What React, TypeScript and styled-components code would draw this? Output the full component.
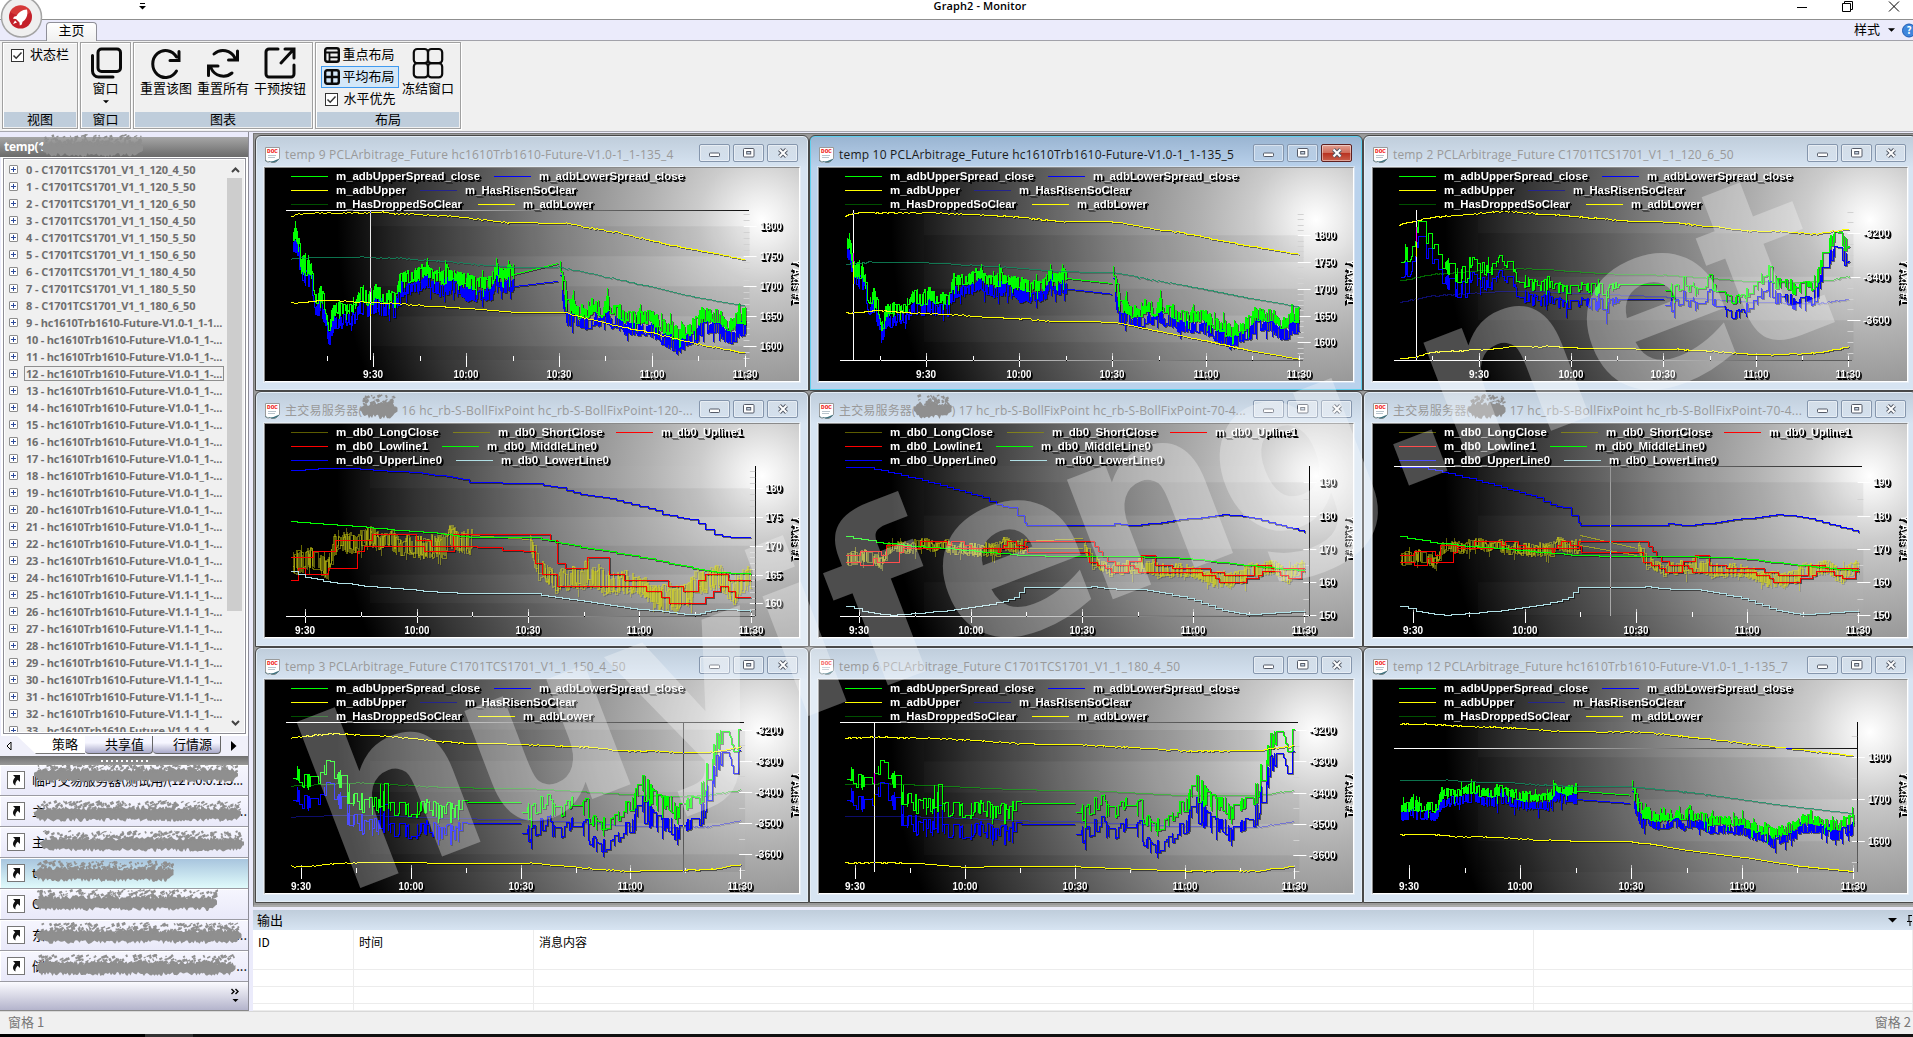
import React from "react";
import styled, { createGlobalStyle, css } from "styled-components";

const UI = `"Open Sans", "Noto Sans", "Noto Sans CJK SC", sans-serif`;
const CN = `"Noto Sans CJK SC", "Open Sans", sans-serif`;

const GlobalStyle = createGlobalStyle`
  * { box-sizing: border-box; }
  body { margin: 0; background: #f0f0f0; overflow: hidden; }
`;

/* ---------- deterministic noise ---------- */

function rng(seed: number) {
  let a = seed;
  return () => {
    a = (a + 0x6d2b79f5) | 0;
    let t = Math.imul(a ^ (a >>> 15), 1 | a);
    t = (t + Math.imul(t ^ (t >>> 7), 61 | t)) ^ t;
    return ((t ^ (t >>> 14)) >>> 0) / 4294967296;
  };
}

/* ---------- chart data ---------- */

type Pt = [number, number];
type Band = [number, number, number];
/** Raster on which a series was sampled: divide, then shift. */
type Grid = { sx: number; sy: number; ox: number; oy: number };
/** Pixel scale: x at 9:30, px per minute, y of value v, px per value unit. */
type Scale = { x: number; k: number; y: number; v: number; u: number };

const G1: Grid = { sx: 2.8, sy: 3, ox: 13, oy: 38 };
const G2: Grid = { sx: 2.8, sy: 3, ox: 11, oy: 38 };
const G3: Grid = { sx: 2.835, sy: 3, ox: 13, oy: 38 };
const G4: Grid = { sx: 2.8, sy: 3, ox: 13, oy: 34 };
const G6: Grid = { sx: 2.835, sy: 3, ox: 13, oy: 34 };
const G7: Grid = { sx: 2.8, sy: 3, ox: 13, oy: 36 };
const G8: Grid = { sx: 1.419, sy: 3, ox: 11, oy: 40 };
const G9: Grid = { sx: 2.835, sy: 3, ox: 13, oy: 36 };

const S1: Scale = { x: 108.4, k: 3.093, y: 58.3, v: 1800, u: 0.6 };
const S2: Scale = { x: 107.2, k: 3.104, y: 67.3, v: 1800, u: 0.535 };
const S3: Scale = { x: 105.5, k: 3.083, y: 65.3, v: -3200, u: 0.2175 };
const S4: Scale = { x: 40.2, k: 3.714, y: 64.3, v: 180, u: 5.75 };
const S5: Scale = { x: 40.4, k: 3.708, y: 58.3, v: 190, u: 3.325 };
const S7: Scale = { x: 36.3, k: 3.657, y: 49.7, v: -3200, u: 0.3117 };
const S8: Scale = { x: 36.2, k: 3.66, y: 50, v: -3200, u: 0.3133 };
const S9: Scale = { x: 36.4, k: 3.695, y: 77.3, v: 1800, u: 0.42 };

const hcAM: Band[] = [
  [110, 320, 328], [116, 288, 328], [124, 305, 335], [130, 325, 385], [135, 372, 425], [145, 380, 430],
  [160, 395, 430], [168, 440, 470], [175, 470, 520], [180, 490, 520], [190, 468, 505], [200, 500, 545],
  [207, 540, 575], [213, 575, 612], [222, 530, 575], [230, 520, 550], [240, 518, 560], [260, 518, 545],
  [285, 515, 545], [292, 495, 520], [302, 468, 510], [320, 490, 520], [335, 470, 520], [345, 458, 510],
  [365, 490, 520], [385, 480, 510], [395, 490, 530], [405, 465, 500], [413, 415, 470], [420, 425, 458],
  [440, 420, 455], [460, 415, 450], [485, 396, 440], [495, 405, 440], [505, 420, 455], [530, 425, 458],
  [545, 400, 455], [560, 415, 448], [575, 425, 460], [600, 430, 475], [630, 445, 475], [665, 440, 475],
  [672, 420, 455], [680, 398, 430], [700, 415, 448], [731, 397, 445],
];
const hcPM: Band[] = [
  [859, 400, 450], [866, 430, 480], [875, 475, 520], [880, 522, 550], [898, 490, 550], [905, 522, 555],
  [915, 525, 560], [940, 532, 560], [960, 515, 545], [980, 530, 560], [995, 486, 550], [1001, 527, 555],
  [1010, 523, 550], [1030, 523, 565], [1040, 541, 575], [1060, 541, 575], [1090, 545, 575],
  [1115, 540, 578], [1130, 555, 590], [1150, 570, 605], [1170, 570, 620], [1190, 590, 632],
  [1205, 585, 620], [1230, 568, 610], [1245, 555, 600], [1255, 530, 570], [1280, 540, 572],
  [1305, 540, 575], [1325, 563, 600], [1345, 567, 600], [1355, 545, 585], [1380, 525, 578],
];
const csAM: Band[] = [
  [112, 365, 400], [120, 350, 395], [125, 335, 400], [135, 350, 400], [150, 330, 375], [158, 280, 320],
  [163, 252, 330], [172, 290, 330], [185, 310, 350], [197, 300, 345], [205, 320, 360], [218, 365, 400],
  [228, 385, 420], [245, 390, 430], [262, 410, 450], [275, 425, 460], [290, 400, 455], [297, 430, 470],
  [308, 376, 415], [320, 375, 415], [330, 390, 425], [345, 390, 445], [365, 400, 435], [380, 395, 425],
  [390, 375, 400], [397, 360, 385], [408, 380, 410], [420, 395, 430], [432, 405, 430], [442, 425, 465],
  [460, 440, 470], [470, 422, 475], [482, 450, 492], [500, 440, 475], [515, 450, 488], [532, 418, 478],
  [540, 455, 480], [560, 455, 490], [580, 455, 500], [600, 460, 498], [620, 455, 485], [640, 450, 490],
  [665, 460, 498], [680, 455, 492], [695, 465, 517], [710, 450, 485], [733, 459, 463],
];
const csPM: Band[] = [
  [862, 455, 485], [870, 475, 502], [890, 460, 500], [905, 450, 488], [920, 428, 465], [935, 455, 492],
  [950, 465, 498], [965, 465, 492], [980, 440, 475], [993, 430, 475], [1005, 450, 492], [1015, 448, 500],
  [1030, 480, 512], [1045, 495, 525], [1060, 490, 520], [1075, 490, 518], [1090, 478, 505],
  [1105, 455, 492], [1120, 460, 485], [1132, 435, 475], [1145, 388, 445], [1160, 405, 465],
  [1175, 425, 475], [1190, 445, 478], [1215, 440, 478], [1235, 465, 507], [1250, 452, 482],
  [1270, 448, 470], [1280, 450, 482], [1295, 410, 460], [1310, 360, 415], [1325, 312, 365],
  [1335, 312, 352], [1347, 298, 325], [1360, 312, 320], [1370, 318, 370], [1385, 303, 348],
];
const rbAM: Band[] = [
  [110, 485, 545], [125, 462, 560], [140, 480, 545], [160, 468, 535], [175, 470, 545], [190, 490, 555],
  [205, 505, 568], [215, 485, 540], [225, 425, 505], [240, 430, 475], [260, 420, 488], [280, 430, 490],
  [300, 418, 488], [320, 405, 458], [340, 412, 478], [355, 430, 485], [370, 425, 468], [395, 415, 488],
  [410, 450, 500], [430, 430, 492], [445, 440, 500], [460, 428, 508], [480, 445, 505], [500, 428, 505],
  [520, 435, 500], [535, 428, 505], [550, 405, 480], [562, 400, 470], [575, 428, 488], [600, 418, 488],
  [617, 400, 508],
];
const rbPM: Band[] = [
  [776, 435, 480], [790, 470, 535], [800, 500, 570], [820, 515, 580], [840, 535, 592], [850, 545, 615],
  [865, 525, 600], [880, 535, 605], [900, 525, 595], [920, 525, 600], [938, 485, 590], [950, 520, 595],
  [970, 520, 600], [985, 530, 620], [1000, 545, 610], [1030, 540, 615], [1060, 540, 610],
  [1090, 550, 620], [1110, 570, 640], [1130, 575, 655], [1150, 580, 672], [1170, 575, 660],
  [1190, 585, 672], [1210, 580, 650], [1230, 555, 645], [1250, 528, 610], [1270, 540, 608],
  [1290, 525, 600], [1310, 518, 600], [1330, 545, 625], [1348, 570, 655], [1370, 535, 605],
  [1397, 520, 605],
];

const at = (g: Grid, [x, y]: Pt): Pt => [x / g.sx - g.ox, y / g.sy - g.oy];
const project = (p: Pt, a: Scale, b: Scale): Pt => {
  const min = (p[0] - a.x) / a.k;
  const val = a.v - (p[1] - a.y) / a.u;
  return [b.x + min * b.k, b.y - (val - b.v) * b.u];
};
const bandTo = (band: Band[], g: Grid, a: Scale, b: Scale): Band[] =>
  band.map(([x, hi, lo]) => {
    const p = project(at(g, [x, hi]), a, b);
    const q = project(at(g, [x, lo]), a, b);
    return [p[0], p[1], q[1]];
  });

type NoiseOpts = { hold: number; shift?: number; fill?: number; widen?: number; spike?: number };

/** Step line that jumps inside a band; `fill` is the share of columns that sweep the whole band. */
function noisePath(band: Band[], seed: number, o: NoiseOpts): string {
  const { hold, shift = 0, fill = 0, widen = 0, spike = 0 } = o;
  const r = rng(seed);
  let d = "";
  let i = 0;
  const end = band[band.length - 1][0];
  for (let x = Math.max(26.5, band[0][0]); x <= end; x += 1) {
    while (i < band.length - 2 && band[i + 1][0] < x) i++;
    const a = band[i];
    const b = band[i + 1];
    const f = Math.min(1, Math.max(0, (x - a[0]) / (b[0] - a[0])));
    const hi = a[1] + (b[1] - a[1]) * f + shift - widen;
    const lo = a[2] + (b[2] - a[2]) * f + shift + widen;
    const roll = r();
    let pick = r();
    const sweep = r();
    const other = r();
    const jump = r();
    pick = pick < 0.5 ? pick * 0.6 : 1 - (1 - pick) * 0.6;
    const y = Math.round(hi + (lo - hi) * pick) + 0.5;
    const px = Math.round(x) + 0.5;
    if (!d) d = `M${px} ${y}`;
    else if (roll > hold) {
      d += `H${px}`;
      if (sweep < fill) d += `V${Math.round(hi + (lo - hi) * (pick < 0.5 ? 1 - other * 0.3 : other * 0.3)) + 0.5}`;
      if (jump < spike) d += `V${Math.round(hi - 3 - other * 4) + 0.5}`;
      else if (jump > 1 - spike) d += `V${Math.round(lo + 3 + other * 4) + 0.5}`;
      d += `V${y}`;
    }
  }
  return d + `H${Math.round(end) + 0.5}`;
}

function stepPath(pts: Pt[], riser = 0): string {
  let d = "";
  pts.forEach(([x, y], i) => {
    if (!i) {
      d = `M${x.toFixed(1)} ${y.toFixed(1)}`;
      return;
    }
    if (riser) {
      const [x0, y0] = pts[i - 1];
      const n = Math.max(1, Math.round((x - x0) / riser));
      for (let s = 1; s <= n; s++) {
        d += `H${(x0 + ((x - x0) * s) / n).toFixed(1)}V${(Math.round(y0 + ((y - y0) * s) / n) + 0.5).toFixed(1)}`;
      }
    } else d += `H${x.toFixed(1)}V${y.toFixed(1)}`;
  });
  return d;
}

const wavyPath = (pts: Pt[], seed: number): string => {
  const r = rng(seed);
  let d = "";
  for (let i = 0; i < pts.length - 1; i++) {
    const [x0, y0] = pts[i];
    const [x1, y1] = pts[i + 1];
    const flat = x1 - x0 > 40;
    for (let x = x0; x < x1; x += 2) {
      const y = y0 + ((y1 - y0) * (x - x0)) / (x1 - x0) + (flat ? 0 : (r() - 0.5) * 1.1);
      d += `${d ? "L" : "M"}${x.toFixed(1)} ${(Math.round(y) + 0.5).toFixed(1)}`;
    }
  }
  const l = pts[pts.length - 1];
  return d + `L${l[0].toFixed(1)} ${l[1].toFixed(1)}`;
};

type Line = { d: string; color: string; opacity?: number; shade?: number };
type ChartDef = {
  kind: "spread" | "boll";
  scale: Scale;
  lines: Line[];
  majors: number[];
  minor: number;
  crossX: number;
  crossY: number;
};

const GREEN = "#00ff00";
const BLUE = "#0000ff";
const YELLOW = "#ffff00";
const TEAL = "#0f8f60";

const P = (g: Grid, flat: number[]): Pt[] => {
  const out: Pt[] = [];
  for (let i = 0; i < flat.length; i += 2) out.push(at(g, [flat[i], flat[i + 1]]));
  return out;
};

function hcLines(g: Grid, s: Scale, up: number[], mid: number[], low: number[], reopen: number): Line[] {
  const am = bandTo(hcAM, G1, S1, s);
  const pm = bandTo(hcPM, G1, S1, s);
  const a = project(at(G1, [733, 434]), S1, s);
  const b = project(at(G1, [858, reopen]), S1, s);
  const off = 20 * s.u;
  const tail = reopen < 420 ? 30 * s.u : off;
  const o: NoiseOpts = { hold: 0.12, fill: 0.6, widen: 1.5 * (s.u / 0.6), spike: 0.06 };
  return [
    { d: noisePath(am, 11, { ...o, shift: off }) + noisePath(pm, 12, { ...o, shift: off }), color: BLUE },
    { d: `M${a[0]} ${a[1] + off}L${b[0]} ${b[1] + tail}`, color: BLUE },
    { d: noisePath(am, 21, o) + noisePath(pm, 22, o), color: GREEN },
    { d: `M${a[0]} ${a[1]}L${b[0]} ${b[1]}`, color: GREEN },
    { d: wavyPath(P(g, up), 5), color: YELLOW },
    { d: wavyPath(P(g, mid), 6), color: TEAL, opacity: 0.8, shade: 0.2 },
    { d: wavyPath(P(g, low), 7), color: YELLOW },
  ];
}

function csLines(g: Grid, s: Scale, up: number[], gm: number[], bm: number[], low: number[]): Line[] {
  const am = bandTo(csAM, G3, S3, s);
  const pm = bandTo(csPM, G3, S3, s);
  const a = project(at(G3, [733, 461]), S3, s);
  const b = project(at(G3, [862, 461]), S3, s);
  const off = 69 * s.u;
  const o: NoiseOpts = { hold: 0.48, fill: 0.3, spike: 0.04 };
  return [
    { d: wavyPath(P(g, gm), 8), color: "#00d000", opacity: 0.5, shade: 0.15 },
    { d: wavyPath(P(g, bm), 9), color: "#2020ff", opacity: 0.42, shade: 0.1 },
    { d: noisePath(am, 31, { ...o, shift: off }) + noisePath(pm, 32, { ...o, shift: off }), color: BLUE },
    { d: noisePath(am, 31, o) + noisePath(pm, 32, o), color: GREEN },
    { d: `M${a[0]} ${Math.round(a[1]) + 0.5}H${b[0]}`, color: GREEN },
    { d: `M${a[0]} ${Math.round(a[1] + off) + 0.5}H${b[0]}`, color: BLUE },
    { d: wavyPath(P(g, up), 5), color: YELLOW },
    { d: wavyPath(P(g, low), 7), color: YELLOW },
  ];
}

const BOLL_UP = [110, 242, 150, 238, 205, 234, 270, 234, 320, 238, 380, 242, 420, 244, 460, 247, 510, 254, 560, 261, 590, 268, 608, 275, 700, 278, 790, 279, 815, 285, 855, 291, 880, 300, 900, 307, 940, 316, 1000, 325, 1040, 335, 1085, 347, 1110, 355, 1130, 360, 1150, 372, 1190, 380, 1225, 387, 1250, 400, 1270, 418, 1295, 433, 1340, 440, 1397, 440];
const BOLL_MID = [110, 394, 200, 401, 300, 409, 380, 417, 460, 423, 560, 434, 610, 442, 790, 442, 850, 455, 920, 470, 1000, 484, 1085, 500, 1150, 514, 1200, 525, 1250, 537, 1300, 546, 1397, 551];
const BOLL_LOW = [110, 545, 150, 560, 200, 572, 280, 583, 350, 590, 460, 600, 540, 606, 610, 610, 790, 610, 850, 622, 950, 637, 1060, 654, 1150, 663, 1210, 671, 1240, 671, 1270, 664, 1300, 656, 1340, 658, 1397, 662];
const RED_UP = [110, 503, 172, 485, 233, 451, 338, 434, 461, 451, 502, 470, 565, 434, 835, 451, 856, 520, 878, 536, 940, 503, 1002, 554, 1043, 572, 1166, 588, 1208, 605, 1250, 572, 1270, 554, 1335, 572, 1397, 572];
const RED_LOW = [110, 572, 130, 536, 150, 554, 213, 536, 295, 485, 316, 470, 484, 485, 567, 470, 632, 472, 700, 480, 760, 485, 795, 520, 813, 554, 856, 588, 1105, 605, 1146, 622, 1168, 640, 1270, 622, 1293, 605, 1312, 588, 1335, 605, 1353, 622, 1397, 622];
const B70_UP = [112, 231, 175, 232, 215, 240, 250, 250, 330, 270, 400, 290, 470, 312, 500, 320, 540, 343, 575, 352, 600, 375, 620, 395, 625, 404, 790, 404, 850, 406, 875, 400, 910, 406, 990, 398, 1060, 388, 1120, 380, 1180, 373, 1220, 374, 1270, 384, 1330, 401, 1380, 414, 1414, 427];
const B70_MID = [112, 440, 200, 455, 280, 465, 400, 475, 480, 483, 560, 490, 620, 496, 820, 498, 940, 499, 1060, 503, 1130, 510, 1200, 519, 1260, 526, 1330, 534, 1414, 541];
const B70_LOW = [112, 648, 160, 662, 210, 672, 240, 674, 340, 666, 400, 660, 500, 646, 560, 632, 590, 622, 620, 590, 790, 590, 810, 587, 880, 598, 950, 597, 1020, 608, 1100, 630, 1180, 660, 1230, 670, 1270, 672, 1330, 667, 1414, 660];
const R70_UP = [112, 497, 154, 485, 215, 497, 228, 466, 274, 470, 325, 455, 400, 466, 412, 455, 450, 466, 470, 475, 560, 466, 572, 455, 597, 466, 620, 455, 818, 470, 830, 485, 840, 500, 856, 515, 878, 525, 918, 514, 950, 497, 990, 526, 1038, 536, 1147, 546, 1185, 556, 1272, 526, 1320, 536, 1414, 536];
const R70_LOW = [112, 516, 154, 526, 190, 506, 202, 516, 266, 487, 275, 475, 545, 486, 550, 476, 622, 470, 627, 486, 803, 516, 825, 526, 850, 536, 866, 546, 915, 525, 930, 536, 942, 546, 1125, 556, 1160, 566, 1173, 576, 1248, 566, 1284, 556, 1295, 545, 1345, 556, 1368, 566, 1405, 545, 1414, 545];

function rbLines(g: Grid, s: Scale, up: number[], mid: number[], low: number[], rUp: number[], rLow: number[], gapY: Pt[]): Line[] {
  const am = bandTo(rbAM, G4, S4, s);
  const pm = bandTo(rbPM, G4, S4, s);
  const x0 = am[am.length - 1][0];
  const x1 = pm[0][0];
  const o: NoiseOpts = { hold: 0.25, fill: 0.35, spike: 0.02 };
  return [
    { d: noisePath(am, 41, o) + noisePath(pm, 42, o), color: "#e6e600", opacity: 0.45, shade: 0.12 },
    { d: noisePath(am, 51, o) + noisePath(pm, 52, o), color: "#e6e620", opacity: 0.4, shade: 0.12 },
    ...gapY.map(([a, b]) => ({ d: `M${x0} ${a}L${x1} ${b}`, color: "#e6e600", opacity: 0.5, shade: 0.1 })),
    { d: stepPath(P(g, rUp)), color: "#ff0000" },
    { d: stepPath(P(g, rLow)), color: "#ff0000" },
    { d: stepPath(P(g, mid), 7), color: GREEN },
    { d: stepPath(P(g, up), 7), color: BLUE },
    { d: stepPath(P(g, low), 7), color: "#b0e0e6" },
  ];
}

const CHARTS: ChartDef[] = [
  {
    kind: "spread", scale: S1, majors: [1800, 1750, 1700, 1650, 1600], minor: 10, crossX: 105.5, crossY: 42.5,
    lines: hcLines(G1, S1,
      [110, 257, 140, 250, 185, 246, 230, 249, 300, 247, 370, 246, 400, 250, 470, 252, 560, 258, 650, 268, 720, 277, 880, 278, 960, 295, 1030, 307, 1110, 328, 1200, 350, 1300, 369, 1379, 387],
      [110, 386, 170, 380, 300, 380, 400, 382, 500, 390, 560, 395, 650, 404, 720, 410, 860, 410, 960, 432, 1040, 451, 1120, 469, 1240, 500, 1379, 526],
      [110, 519, 150, 516, 210, 509, 300, 515, 400, 519, 500, 527, 600, 533, 730, 545, 870, 546, 950, 566, 1040, 590, 1140, 612, 1240, 639, 1320, 655, 1379, 667], 400),
  },
  {
    kind: "spread", scale: S2, majors: [1800, 1750, 1700, 1650, 1600], minor: 10, crossX: 34.5, crossY: 192.5,
    lines: hcLines(G2, S2,
      [105, 256, 150, 246, 250, 248, 350, 246, 400, 250, 500, 254, 570, 258, 640, 266, 720, 274, 850, 274, 880, 277, 950, 292, 1040, 305, 1110, 320, 1200, 340, 1290, 356, 1376, 371],
      [105, 403, 180, 395, 370, 398, 450, 404, 560, 410, 700, 423, 860, 427, 950, 446, 1060, 466, 1240, 504, 1376, 529],
      [105, 549, 200, 541, 300, 548, 400, 552, 500, 560, 600, 565, 700, 573, 860, 575, 980, 602, 1110, 630, 1240, 661, 1376, 686], 451),
  },
  {
    kind: "spread", scale: S3, majors: [-3200, -3400, -3600], minor: 50, crossX: 43.5, crossY: 192.5,
    lines: csLines(G3, S3,
      [112, 284, 160, 270, 200, 262, 250, 257, 310, 252, 380, 245, 420, 243, 500, 250, 600, 257, 700, 266, 760, 272, 880, 275, 950, 284, 1020, 290, 1100, 301, 1200, 303, 1290, 311, 1340, 303, 1387, 296],
      [112, 452, 200, 433, 280, 426, 400, 416, 480, 415, 560, 420, 700, 430, 860, 434, 950, 440, 1100, 453, 1230, 456, 1330, 450, 1387, 438],
      [112, 517, 200, 497, 300, 490, 400, 483, 520, 484, 700, 492, 860, 499, 950, 503, 1100, 515, 1300, 520, 1387, 506],
      [112, 685, 160, 680, 200, 666, 300, 660, 380, 656, 440, 648, 540, 648, 660, 655, 900, 656, 1000, 663, 1100, 670, 1180, 673, 1260, 670, 1320, 664, 1387, 648]),
  },
  {
    kind: "boll", scale: S4, majors: [180, 175, 170, 165, 160], minor: 1, crossX: 490.5, crossY: 192.5,
    lines: rbLines(G4, S4, BOLL_UP, BOLL_MID, BOLL_LOW, RED_UP, RED_LOW, [[111.5, 115.5]]),
  },
  {
    kind: "boll", scale: S5, majors: [190, 180, 170, 160, 150], minor: 5, crossX: 490.5, crossY: 192.5,
    lines: rbLines(G6, S5, B70_UP, B70_MID, B70_LOW, R70_UP, R70_LOW, [[117.5, 114.5], [124.5, 124.5]]),
  },
  {
    kind: "boll", scale: S5, majors: [190, 180, 170, 160, 150], minor: 5, crossX: 237.5, crossY: 42.5,
    lines: rbLines(G6, S5, B70_UP, B70_MID, B70_LOW, R70_UP, R70_LOW, [[111.5, 124.5], [121.5, 131.5]]),
  },
  {
    kind: "spread", scale: S7, majors: [-3200, -3300, -3400, -3500, -3600], minor: 50, crossX: 418.5, crossY: 42.5,
    lines: csLines(G7, S7,
      [110, 280, 150, 276, 220, 268, 300, 271, 400, 277, 500, 288, 600, 297, 750, 299, 850, 305, 950, 308, 1040, 320, 1120, 318, 1200, 324, 1280, 324, 1330, 316, 1369, 307],
      [110, 425, 300, 415, 400, 421, 500, 427, 640, 431, 770, 432, 900, 440, 1060, 451, 1200, 456, 1280, 453, 1369, 437],
      [110, 518, 300, 511, 420, 517, 600, 523, 770, 526, 900, 533, 1060, 545, 1200, 549, 1280, 547, 1369, 530],
      [110, 666, 160, 666, 230, 658, 300, 654, 470, 655, 600, 658, 770, 656, 870, 664, 950, 672, 1050, 680, 1200, 678, 1290, 674, 1369, 660]),
  },
  {
    kind: "spread", scale: S8, majors: [-3200, -3300, -3400, -3500, -3600], minor: 50, crossX: 55.5, crossY: 42.5,
    lines: csLines(G8, S8,
      [53, 293, 100, 290, 140, 292, 180, 294, 220, 298, 250, 301, 300, 310, 380, 312, 420, 317, 450, 320, 490, 325, 540, 332, 590, 331, 640, 331, 660, 324, 690, 317],
      [53, 433, 110, 430, 180, 436, 300, 448, 400, 450, 520, 464, 640, 465, 690, 450],
      [53, 527, 180, 530, 300, 541, 400, 545, 530, 559, 640, 560, 690, 543],
      [53, 668, 100, 667, 150, 668, 220, 680, 280, 679, 380, 679, 440, 684, 540, 692, 590, 690, 640, 691, 690, 677]),
  },
  {
    kind: "spread", scale: S9, majors: [1800, 1700, 1600], minor: 50, crossX: 484.5, crossY: 68.5,
    lines: hcLines(G9, S9,
      [112, 239, 200, 240, 290, 245, 370, 248, 470, 253, 570, 261, 700, 263, 790, 262, 900, 274, 1000, 285, 1100, 298, 1200, 310, 1300, 322, 1397, 334],
      [112, 407, 240, 407, 310, 412, 430, 415, 520, 422, 620, 426, 770, 427, 900, 440, 1000, 453, 1200, 483, 1397, 507],
      [112, 571, 200, 570, 260, 576, 360, 578, 470, 584, 560, 589, 770, 592, 850, 603, 950, 621, 1100, 640, 1240, 664, 1397, 681], 451),
  },
];

type LegendItem = { x: number; row: number; w: number; text: string; color: string };
const LEGENDS: Record<string, LegendItem[]> = {
  spread: [
    { x: 26, row: 0, w: 144, text: "m_adbUpperSpread_close", color: GREEN },
    { x: 229, row: 0, w: 145, text: "m_adbLowerSpread_close", color: BLUE },
    { x: 26, row: 1, w: 70, text: "m_adbUpper", color: YELLOW },
    { x: 155, row: 1, w: 111, text: "m_HasRisenSoClear", color: "#24248f" },
    { x: 26, row: 2, w: 126, text: "m_HasDroppedSoClear", color: "#005000" },
    { x: 213, row: 2, w: 70, text: "m_adbLower", color: YELLOW },
  ],
  boll: [
    { x: 26, row: 0, w: 103, text: "m_db0_LongClose", color: "#5c5c00" },
    { x: 188, row: 0, w: 105, text: "m_db0_ShortClose", color: "#80801c" },
    { x: 351, row: 0, w: 82, text: "m_db0_Upline1", color: "#ff0000" },
    { x: 26, row: 1, w: 92, text: "m_db0_Lowline1", color: "#ff0000" },
    { x: 177, row: 1, w: 110, text: "m_db0_MiddleLine0", color: GREEN },
    { x: 26, row: 2, w: 106, text: "m_db0_UpperLine0", color: BLUE },
    { x: 191, row: 2, w: 108, text: "m_db0_LowerLine0", color: "#b0e0e6" },
  ],
};

/* ---------- chart ---------- */

const ChartSvg = styled.svg`
  display: block;
  isolation: isolate;
  text { font: bold 11px "Liberation Sans", Arial, sans-serif; }
`;
const Shadowed = styled.text`
  fill: #fff;
  text-shadow: 1px 1px 0 #000, 2px 2px 0 #000;
`;

const ShadowText = ({ x, y, w, anchor = "start", children }: { x: number; y: number; w?: number; anchor?: "start" | "middle" | "end"; children: React.ReactNode }) => (
  <Shadowed x={x} y={y} textLength={w} lengthAdjust="spacingAndGlyphs" textAnchor={anchor}>
    {children}
  </Shadowed>
);

function Chart({ def, id }: { def: ChartDef; id: string }) {
  const s = def.scale;
  const xr = s.x + 120 * s.k;
  const yOf = (v: number) => s.y - (v - s.v) * s.u;
  const minors: number[] = [];
  const start = Math.ceil((s.v + (s.y - 192) / s.u) / def.minor) * def.minor;
  for (let v = start; yOf(v) >= 42; v += def.minor) minors.push(yOf(v));
  const ys = [42, ...def.majors.map(yOf), 192];
  const hours = ["9:30", "10:00", "10:30", "11:00", "11:30"];
  const ticks: number[] = [];
  for (let m = -15; m < 120; m += 30) if (s.x + m * s.k > 28) ticks.push(s.x + m * s.k);
  return (
    <ChartSvg width={534} height={213} viewBox="0 0 534 213">
      <defs>
        <radialGradient id={id} gradientUnits="userSpaceOnUse" cx={497} cy={52} r={425}>
          <stop offset="0" stopColor="#fff" />
          <stop offset="0.06" stopColor="#ececec" />
          <stop offset="0.15" stopColor="#cccccc" />
          <stop offset="0.27" stopColor="#b0b0b0" />
          <stop offset="0.4" stopColor="#969696" />
          <stop offset="0.5" stopColor="#808080" />
          <stop offset="0.64" stopColor="#5e5e5e" />
          <stop offset="0.82" stopColor="#343434" />
          <stop offset="1" stopColor="#000" />
        </radialGradient>
      </defs>
      <rect width={534} height={213} fill={`url(#${id})`} />
      {ys.slice(0, -1).map((y, i) => (
        <rect key={i} x={105} y={y} width={xr - 100} height={Math.max(0, ys[i + 1] - y)} fill={i % 2 ? "#000" : "#fff"} opacity={i % 2 ? 0.05 : 0.02} />
      ))}
      {minors.map((y, i) => (
        <path key={i} d={`M${xr - 1} ${Math.round(y) + 0.5}h6`} stroke="#d2d2d2" />
      ))}
      {def.majors.map((v) => (
        <path key={v} d={`M${xr - 1} ${Math.round(yOf(v)) + 0.5}h13`} stroke="#fff" />
      ))}
      <g shapeRendering="crispEdges">
        {ticks.map((x) => (
          <path key={x} d={`M${Math.round(x) + 0.5} 188v5`} stroke="#fff" />
        ))}
        {hours.map((h, i) => (
          <g key={h}>
            <path d={`M${Math.round(s.x + i * 30 * s.k) + 0.5} 185v4`} stroke="#c0c0c0" />
            <path d={`M${Math.round(s.x + i * 30 * s.k) + 0.5} 188v11`} stroke="#fff" />
          </g>
        ))}
        {def.lines.map((l, i) => (
          <path key={"s" + i} d={l.d} fill="none" stroke="#000" opacity={l.shade ?? 0.5} transform="translate(1 1)" />
        ))}
        {def.lines.map((l, i) => (
          <path key={i} d={l.d} fill="none" stroke={l.color} opacity={l.opacity ?? 1} />
        ))}
        <path d={`M21 ${def.crossY}H${Math.round(xr + 4)}M${def.crossX} 42V192`} fill="none" stroke="#fff" style={{ mixBlendMode: "difference" }} />
      </g>
      {LEGENDS[def.kind].map((l) => (
        <g key={l.text}>
          <path d={`M${l.x} ${8.5 + l.row * 14}h37`} stroke={l.color} />
          <ShadowText x={l.x + 45} y={12 + l.row * 14} w={l.w}>{l.text}</ShadowText>
        </g>
      ))}
      {hours.map((h, i) => (
        <ShadowText key={h} x={Math.round(s.x + i * 30 * s.k)} y={210} w={i ? 25 : 20} anchor="middle">{h}</ShadowText>
      ))}
      {def.majors.map((v) => (
        <ShadowText key={v} x={517} y={Math.round(yOf(v)) + 4} w={v < 0 ? 27 : v > 999 ? 22 : 17} anchor="end">{v}</ShadowText>
      ))}
      <g transform="translate(528 91) rotate(90)">
        <ShadowText x={0} y={0} w={45}>Y Axis #1</ShadowText>
      </g>
    </ChartSvg>
  );
}

/* ---------- scribbled-out areas ---------- */

const ScribbleSvg = styled.svg<{ $x: number; $y: number }>`
  position: absolute;
  left: ${(p) => p.$x}px;
  top: ${(p) => p.$y}px;
`;

function Scribble({ x, y, w, h, seed }: { x: number; y: number; w: number; h: number; seed: number }) {
  const r = rng(seed);
  const top: string[] = [];
  const bot: string[] = [];
  for (let i = 0; i <= w; i += 1.5) {
    const edge = Math.min(1, 0.25 + i / 8, 0.25 + (w - i) / 8);
    const mid = h * 0.6;
    top.push(`${i.toFixed(1)},${(mid - edge * h * (0.12 + r() * 0.2)).toFixed(1)}`);
    bot.unshift(`${i.toFixed(1)},${(mid + edge * h * (0.22 + r() * 0.18)).toFixed(1)}`);
  }
  const specks = Array.from({ length: Math.round(w * 1.1) }, () => [2 + r() * (w - 5), h * 0.05 + r() * h * 0.45, 1 + r() * 3, 1 + r() * 2]);
  return (
    <ScribbleSvg $x={x} $y={y} width={w} height={h} fill="#8f8f8f">
      <polygon points={[...top, ...bot].join(" ")} />
      {specks.map(([a, b, c, d], i) => (
        <rect key={i} x={a} y={b} width={c} height={d} transform={`rotate(-25 ${a} ${b})`} />
      ))}
    </ScribbleSvg>
  );
}

/* ---------- frame ---------- */

const Screen = styled.div`
  position: relative;
  width: 1913px;
  height: 1037px;
  overflow: hidden;
  display: flex;
  flex-direction: column;
  background: #ebebfb;
  font: 12px/1 ${UI};
  color: #000;
`;
const TitleBar = styled.header`
  position: relative;
  height: 20px;
  flex: none;
  display: grid;
  grid-template-columns: 1fr auto 1fr;
  background: #fff;
  border-bottom: 1px solid #8f8f8f;
`;
const QuickArea = styled.div`
  padding: 3px 0 0 139px;
  line-height: 0;
`;
const AppTitle = styled.div`
  font: 600 11px/12px ${UI};
  letter-spacing: 0.1px;
  padding: 0 0 0 47px;
`;
const WinControls = styled.div`
  display: flex;
  justify-content: flex-end;
  gap: 34px;
  padding: 1px 13px 0 0;
`;
const TabStrip = styled.div`
  height: 21px;
  flex: none;
  display: flex;
  align-items: flex-end;
  background: #ebebfb;
  border-bottom: 1px solid #a2a2aa;
  padding-left: 46px;
`;
const RibbonTab = styled.div`
  width: 51px;
  height: 19px;
  margin-bottom: -1px;
  border: 1px solid #8f8f98;
  border-bottom: 0;
  border-radius: 4px 4px 0 0;
  background: linear-gradient(#fff, #f0f0f0);
  font: 13px/14px ${CN};
  text-align: center;
`;
const StyleMenu = styled.div`
  margin-left: auto;
  display: flex;
  align-items: center;
  gap: 8px;
  height: 20px;
  font: 13px/16px ${CN};
  span { margin-bottom: 2px; }
  svg + svg { margin-left: -1px; }
`;
const Orb = styled.svg`
  position: absolute;
  left: 0;
  top: -4px;
`;

const Ribbon = styled.div`
  height: 91px;
  flex: none;
  display: flex;
  gap: 2px;
  padding: 1px 0 0 2px;
  background: #f0f0f0;
  border-bottom: 1px solid #a8a8b0;
`;
const Group = styled.section<{ $w: number }>`
  width: ${(p) => p.$w}px;
  height: 87px;
  display: flex;
  flex-direction: column;
  border: 1px solid #a0a0a0;
  box-shadow: inset 1px 1px 0 #fff, 1px 1px 0 #fff;
  padding: 1px;
`;
const GroupBody = styled.div`
  flex: 1;
  min-height: 0;
  display: flex;
  justify-content: center;
  gap: 6px;
`;
const GroupLabel = styled.div`
  height: 15px;
  flex: none;
  background: #bfcddb;
  text-align: center;
  font: 13px/14px ${CN};
`;
const BigButton = styled.div<{ $w?: number }>`
  width: ${(p) => p.$w ?? 51}px;
  padding-top: 2px;
  display: flex;
  flex-direction: column;
  align-items: center;
  white-space: nowrap;
  font: 13px/16px ${CN};
  svg { flex: none; }
  svg + svg { margin-top: 4px; }
`;
const SmallColumn = styled.div`
  width: 78px;
  margin: 0 -2px 0 -2px;
  display: flex;
  flex-direction: column;
`;
const SmallButton = styled.div<{ $on?: boolean }>`
  height: 22px;
  display: flex;
  align-items: center;
  gap: 3px;
  padding-left: 2px;
  white-space: nowrap;
  font: 13px/18px ${CN};
  border: 1px solid ${(p) => (p.$on ? "#3f9af0" : "transparent")};
  background: ${(p) => (p.$on ? "#d3e7f8" : "transparent")};
`;
const CheckBox = styled.span<{ $inset?: number }>`
  width: 13px;
  height: 13px;
  flex: none;
  display: flex;
  margin-left: ${(p) => p.$inset ?? 0}px;
  border: 1px solid #333;
  background: #fff;
`;
const SmallLabel = styled.span<{ $inset?: number }>`
  margin: -2px 0 0 ${(p) => p.$inset ?? 0}px;
`;
const CheckLine = styled.div`
  display: flex;
  align-items: center;
  align-self: flex-start;
  gap: 6px;
  width: 100%;
  height: 22px;
  padding: 0 0 0 7px;
  font: 13px/18px ${CN};
`;

const Body = styled.div`
  height: 879px;
  flex: none;
  display: flex;
  gap: 4px;
`;

/* ---------- sidebar ---------- */

const Side = styled.aside`
  width: 249px;
  flex: none;
  padding-top: 5px;
  display: flex;
  flex-direction: column;
  border-right: 1px solid #8c8c96;
`;
const SideHead = styled.div`
  position: relative;
  height: 20px;
  flex: none;
  padding-left: 4px;
  background: linear-gradient(#a6a6a6, #6a6a6a);
  color: #fff;
  font: bold 12px/19px ${UI};
  letter-spacing: -0.3px;
`;
const TreeBox = styled.div`
  height: 576px;
  flex: none;
  margin: 1px 2px 2px 3px;
  padding: 2px 1px 1px;
  display: flex;
  border: 1px solid #8e8e96;
  background: #f0f0f0;
  box-shadow: inset 0 0 0 1px #fff, 0 0 0 2px #fff;
  overflow: hidden;
`;
const TreeRows = styled.div`
  flex: 1;
  overflow: hidden;
  min-width: 0;
`;
const TreeRow = styled.div`
  height: 17px;
  display: flex;
  align-items: center;
  padding-left: 4px;
`;
const Expander = styled.span`
  width: 9px;
  height: 9px;
  flex: none;
  border: 1px solid #8c8c8c;
  border-radius: 1px;
  background: linear-gradient(#2c4a9a, #2c4a9a) center / 5px 1px no-repeat,
    linear-gradient(#2c4a9a, #2c4a9a) center / 1px 5px no-repeat, #fff;
`;
const TreeText = styled.span<{ $sel?: boolean; $wide?: boolean }>`
  margin-left: 6px;
  height: 15px;
  width: 200px;
  padding-left: 1px;
  border: 1px solid ${(p) => (p.$sel ? "#8e8e8e" : "transparent")};
  font: 700 11px/13px ${UI};
  letter-spacing: ${(p) => (p.$wide ? -0.1 : -0.2)}px;
  color: #6e6e6e;
  white-space: nowrap;
`;
const ScrollBar = styled.div`
  width: 16px;
  flex: none;
  display: flex;
  flex-direction: column;
  align-items: center;
  justify-content: space-between;
  padding: 6px 0;
  margin-right: 1px;
  background: linear-gradient(#cdcdcd, #cdcdcd) 0 17px / 15px 433px no-repeat, #f0f0f0;
`;
const SideTabs = styled.div`
  height: 20px;
  flex: none;
  display: flex;
  background: #f0f0fa;
  font: 13px/15px ${CN};
`;
const SideTab = styled.div<{ $on?: boolean }>`
  width: 68px;
  height: 18px;
  padding-left: ${(p) => (p.$on ? 35 : 20)}px;
  white-space: nowrap;
  ${(p) =>
    p.$on
      ? css`background: #fff; border-bottom: 1px solid #777; clip-path: polygon(0 0, 100% 0, 100% 100%, 19px 100%);`
      : css`background: linear-gradient(#f6f6ff 40%, #a9a9c9); border: 1px solid #666; border-top: 0; border-left: 0; border-radius: 0 0 4px 4px;`}
`;
const TabArrow = styled.div<{ $pad?: number }>`
  width: 17px;
  padding: 5px 0 0 ${(p) => p.$pad ?? 6}px;
  line-height: 0;
`;
const GripBar = styled.div`
  height: 9px;
  flex: none;
  display: flex;
  align-items: center;
  justify-content: center;
  background: linear-gradient(#707070, #979797);
`;
const GripDots = styled.div`
  width: 47px;
  height: 2px;
  background: repeating-linear-gradient(90deg, #fff 0 2px, transparent 2px 5px);
`;
const ServerRow = styled.div<{ $sel?: boolean }>`
  position: relative;
  height: 31px;
  flex: none;
  display: flex;
  align-items: center;
  padding-left: 7px;
  gap: 7px;
  overflow: hidden;
  white-space: nowrap;
  border-bottom: 1px solid #9a9aa2;
  box-shadow: inset 1px 1px 0 #fff;
  background: ${(p) => (p.$sel ? "linear-gradient(#a6c3dd, #e0fbfb)" : "linear-gradient(#f6f6fe, #e9e9f9)")};
  font: 13px/18px ${CN};
`;
const ServerName = styled.span`
  letter-spacing: -0.3px;
`;
const Shortcut = styled.svg`
  border: 1px solid #777;
  background: #fff;
  flex: none;
`;
const Tail = styled.span`
  margin-left: auto;
  padding-right: 1px;
`;
const SideFoot = styled.div`
  flex: 1;
  background: linear-gradient(#fbfbff, #b4b4cc);
  text-align: right;
  padding: 6px 9px 0 0;
  line-height: 0;
  border-bottom: 1px solid #888;
`;

/* ---------- MDI area ---------- */

const Main = styled.main`
  flex: 1;
  min-width: 0;
  display: flex;
  flex-direction: column;
`;
const Mdi = styled.div`
  height: 774px;
  flex: none;
  display: grid;
  grid-template-columns: repeat(3, 554px);
  grid-template-rows: repeat(3, 256px);
  padding: 1px 0 0 1px;
  margin-top: 1px;
  border: 1px solid #777;
  border-right: 0;
  border-bottom: 2px solid #ababab;
  background: #9a9a9a;
  overflow: hidden;
`;
const Win = styled.div<{ $active?: boolean }>`
  width: 554px;
  height: 256px;
  border: 1px solid #484848;
  border-radius: 6px 6px 0 0;
  padding: 0 8px 0 8px;
  background: ${(p) => (p.$active ? "linear-gradient(#99b4d1, #bad2ec 32px)" : "linear-gradient(#bfcddb, #d7e4f2 32px)")};
  box-shadow: inset 0 0 0 1px ${(p) => (p.$active ? "#5fd0ee" : "#e4edf6")};
`;
const WinBar = styled.div`
  height: 31px;
  display: flex;
  align-items: center;
  padding: 6px 2px 0 1px;
`;
const WinTitle = styled.div<{ $active?: boolean; $ls: number }>`
  position: relative;
  flex: 1;
  padding-left: 5px;
  margin-top: 0;
  font: 12px/18px "Open Sans", "Noto Sans CJK SC", sans-serif;
  letter-spacing: ${(p) => p.$ls}px;
  color: ${(p) => (p.$active ? "#1a1a1a" : "#999")};
  white-space: pre;
`;
const WinButtons = styled.div`
  display: flex;
  gap: 3px;
`;
const WinButton = styled.div<{ $red?: boolean }>`
  width: 31px;
  height: 18px;
  margin-top: -4px;
  display: flex;
  align-items: center;
  justify-content: center;
  border: 1px solid ${(p) => (p.$red ? "#5e1f1f" : "#8596ad")};
  border-radius: 2px;
  box-shadow: inset 0 0 0 1px rgba(255, 255, 255, 0.45);
  background: ${(p) => (p.$red ? "linear-gradient(#e2a092, #cf6d5b 48%, #b8301f 50%, #c9604c)" : "linear-gradient(rgba(255,255,255,.25), rgba(255,255,255,.05))")};
`;
const WinClient = styled.div`
  width: 536px;
  height: 215px;
  border: 1px solid #8a8a8a;
  border-right-color: #fff;
  border-bottom-color: #fff;
  outline: 1px solid rgba(255, 255, 255, 0.35);
`;
const Watermark = styled.svg`
  position: absolute;
  left: 0;
  top: 0;
  pointer-events: none;
  text { font: bold 234px "DejaVu Sans", sans-serif; }
`;

/* ---------- output panel ---------- */

const OutHead = styled.div`
  height: 20px;
  flex: none;
  margin-top: 3px;
  display: flex;
  align-items: center;
  justify-content: space-between;
  padding: 0 1px 0 4px;
  background: linear-gradient(#bfcddb, #d7e4f2);
  font: 13px/18px ${CN};
`;
const OutTable = styled.div`
  flex: 1;
  display: grid;
  grid-template-columns: 101px 180px 1000px 1fr;
  grid-template-rows: 40px 17px 17px 1fr;
  background: #fff;
  font: 12px/20px ${CN};
  overflow: hidden;
`;
const Cell = styled.div<{ $head?: boolean }>`
  border-right: 1px solid #ececec;
  border-bottom: 1px solid #ececec;
  padding: ${(p) => (p.$head ? "2px 0 0 5px" : "0")};
`;
const StatusBar = styled.footer`
  height: 23px;
  flex: none;
  display: flex;
  justify-content: space-between;
  padding: 0 2px 0 8px;
  background: #f0f0f0;
  border-top: 1px solid #d8d8d8;
  color: #777;
  font: 13px/20px ${CN};
`;
const TaskEdge = styled.div`
  flex: 1;
  background: linear-gradient(90deg, #000 145px, #333 145px 193px, #111 193px);
`;

/* ---------- icons ---------- */

const Down = ({ s = 7 }: { s?: number }) => (
  <svg width={s} height={s / 2 + 0.5} viewBox="0 0 8 4"><path d="M0 0h8L4 4z" /></svg>
);
const Tick = () => (
  <svg width="11" height="11" viewBox="0 0 11 11"><path d="M1.5 5.5 4.2 8.2 9.5 2.6" fill="none" stroke="#333" strokeWidth="1.5" /></svg>
);
const big = { width: 32, height: 34, viewBox: "0 0 32 34", fill: "none", stroke: "#0a0a0a", strokeWidth: 3 } as const;
const IconWindows = () => (
  <svg {...big}><rect x="8" y="3" width="22.5" height="22.5" rx="3.5" /><path d="M2.500 9.500V25a6 6 0 0 0 6 6H23" strokeLinecap="round" /></svg>
);
const IconReset = () => (
  <svg {...big} strokeLinecap="round"><path d="M29 5.500V14.500H20M26.500 11A12.800 13.500 0 1 0 26.500 25" /></svg>
);
const IconResetAll = () => (
  <svg {...big} strokeLinecap="round"><path d="M30.5 5v9H21.5M28 12A13.500 13.500 0 0 0 7 8M1.500 29.500V20H11M4 22A13.500 13.500 0 0 0 25 27" /></svg>
);
const IconExport = () => (
  <svg {...big} strokeLinecap="round"><path d="M14 3H5A3 3 0 0 0 2 6V28a3 3 0 0 0 3 3H27a3 3 0 0 0 3-3V19M21 3h9v9M29 4 17 17" /></svg>
);
const IconFreeze = () => (
  <svg {...big} strokeWidth={2.2}><rect x="1.8" y="3" width="14.2" height="14.2" rx="3.5" /><rect x="16" y="3" width="14.2" height="14.2" rx="3.5" /><rect x="1.8" y="17.2" width="14.2" height="14.2" rx="3.5" /><rect x="16" y="17.2" width="14.2" height="14.2" rx="3.5" /></svg>
);
const IconFocus = () => (
  <svg width="16" height="16" viewBox="0 0 16 16" fill="none" stroke="#0a0a0a" strokeWidth="2.400"><rect x="1.200" y="1.200" width="13.600" height="13.600" rx="2" /><path d="M1 5.500h14M5.500 5v10M5.500 10.300h9" strokeWidth="1.800" /></svg>
);
const IconAverage = () => (
  <svg width="16" height="16" viewBox="0 0 16 16" fill="none" stroke="#0a0a0a" strokeWidth="2.400"><rect x="1.200" y="1.200" width="13.600" height="13.600" rx="2" /><path d="M1 8h14M8 1v14" /></svg>
);
const DocIcon = () => (
  <svg width="15" height="16" viewBox="0 0 15 16">
    <path d="M.5.5h14v11l-4 4H6l-1-1-2 .8L.5 14z" fill="#fff" stroke="#9a9a9a" />
    <path d="M14.5 11.5c-2 2.5-4 4-7 4L.5 14v-1c3 2 6 1.500 8 1z" fill="#3b6f7c" />
    <path d="M3 8.500h8M3 10.500h7" stroke="#b8c4cc" />
    <text x="7.500" y="6.300" textAnchor="middle" fill="#f01010" fontFamily="Liberation Mono, monospace" fontWeight="bold" fontSize="6">DOC</text>
  </svg>
);
const MinGlyph = () => (
  <svg width="11" height="10" viewBox="0 0 11 10"><rect x=".5" y="5" width="10" height="3.500" rx=".8" fill="#fff" stroke="#555b68" /></svg>
);
const MaxGlyph = () => (
  <svg width="12" height="10" viewBox="0 0 12 10"><rect x=".5" y=".5" width="10.500" height="8.500" rx="1" fill="#fff" stroke="#555b68" /><rect x="3.700" y="3.500" width="4" height="2.500" fill="#c8d6e6" stroke="#555b68" /></svg>
);
const CloseGlyph = () => (
  <svg width="12" height="10" viewBox="0 0 12 10"><path d="M2.500 1.500 9.500 8.500M9.500 1.500 2.500 8.500" stroke="#555b68" strokeWidth="4" /><path d="M2.500 1.500 9.500 8.500M9.500 1.500 2.500 8.500" stroke="#fff" strokeWidth="2" /></svg>
);

const TITLES: { text: string; tail?: string; scribble?: boolean; ls: number }[] = [
  { text: "temp 9 PCLArbitrage_Future hc1610Trb1610-Future-V1.0-1_1-135_4", ls: 0.21 },
  { text: "temp 10 PCLArbitrage_Future hc1610Trb1610-Future-V1.0-1_1-135_5", ls: 0.2 },
  { text: "temp 2 PCLArbitrage_Future C1701TCS1701_V1_1_120_6_50", ls: 0.16 },
  { text: "主交易服务器(", tail: " 16 hc_rb-S-BollFixPoint hc_rb-S-BollFixPoint-120-...", scribble: true, ls: 0.24 },
  { text: "主交易服务器(", tail: ") 17 hc_rb-S-BollFixPoint hc_rb-S-BollFixPoint-70-4...", scribble: true, ls: 0.16 },
  { text: "主交易服务器(", tail: " 17 hc_rb-S-BollFixPoint hc_rb-S-BollFixPoint-70-4...", scribble: true, ls: 0.26 },
  { text: "temp 3 PCLArbitrage_Future C1701TCS1701_V1_1_150_4_50", ls: 0.16 },
  { text: "temp 6 PCLArbitrage_Future C1701TCS1701_V1_1_180_4_50", ls: 0.17 },
  { text: "temp 12 PCLArbitrage_Future hc1610Trb1610-Future-V1.0-1_1-135_7", ls: 0.2 },
];

const Blot = styled.span`
  display: inline-block;
  width: 36px;
`;

const TREE = [
  ...["120_4", "120_5", "120_6", "150_4", "150_5", "150_6", "180_4", "180_5", "180_6"].map((s) => `C1701TCS1701_V1_1_${s}_50`),
  "hc1610Trb1610-Future-V1.0-1_1-1...",
  ...Array.from({ length: 14 }, () => "hc1610Trb1610-Future-V1.0-1_1-..."),
  ...Array.from({ length: 10 }, () => "hc1610Trb1610-Future-V1.1-1_1-..."),
];

const SERVERS: { text: string; tail?: string; x: number; w: number; sel?: boolean; y: number }[] = [
  { text: "临时交易服务器(测试用)(127.0.0.1:3...", x: 34, w: 204, y: -4 },
  { text: "主", tail: "...", x: 34, w: 207, y: 4 },
  { text: "主", x: 40, w: 204, y: 3 },
  { text: "temp", x: 34, w: 140, sel: true, y: 2 },
  { text: "C", x: 34, w: 184, y: 0 },
  { text: "东", tail: "...", x: 36, w: 206, y: 2 },
  { text: "储", tail: "...", x: 36, w: 200, y: 3 },
];

export default function App() {
  return (
    <Screen>
      <GlobalStyle />
      <TitleBar>
        <QuickArea>
          <svg width="7" height="7" viewBox="0 0 7 7"><path d="M1 .5h5" stroke="#000" /><path d="M0 3h7L3.500 6.500z" /></svg>
        </QuickArea>
        <AppTitle>Graph2 - Monitor</AppTitle>
        <WinControls>
          <svg width="12" height="11"><path d="M1 6.500h10" stroke="#000" /></svg>
          <svg width="12" height="11" fill="none" stroke="#000"><path d="M.5 2.500h8v8h-8zM2.500 2.500v-2h8v8h-2" /></svg>
          <svg width="12" height="11" stroke="#000"><path d="M1 .5 11 10.500M11 .5 1 10.500" /></svg>
        </WinControls>
      </TitleBar>
      <TabStrip>
        <RibbonTab>主页</RibbonTab>
        <StyleMenu>
          <span>样式</span> <Down />
          <svg width="11" height="15" viewBox="0 0 11 15"><circle cx="7" cy="7.500" r="6.500" fill="#3e86dc" stroke="#1f5cb4" /><text x="7" y="11" fill="#fff" textAnchor="middle" fontSize="10" fontWeight="bold">?</text></svg>
        </StyleMenu>
      </TabStrip>
      <Orb width="43" height="43" viewBox="0 0 43 43">
        <circle cx="21.500" cy="21" r="20" fill="#efefef" stroke="#a4a4a4" strokeWidth="1.500" />
        <circle cx="20.500" cy="21" r="11.500" fill="#c4202a" />
        <path d="M10 16a11.500 11.500 0 0 1 21 0c-5 4-14 5-21 0z" fill="#dd4440" opacity=".7" />
        <path d="M27 13.500c-5 0-8.500 3-10.500 6.500l-2.500.7-1 2 3 .3 3.500 3.500.3 3 2-1 .7-2.700c3-2 6-6 4.500-12.300zM15 24.500l-2 3.500 4-1.500z" fill="#fff" />
      </Orb>
      <Ribbon>
        <Group $w={76}>
          <GroupBody>
            <CheckLine><CheckBox><Tick /></CheckBox><SmallLabel>状态栏</SmallLabel></CheckLine>
          </GroupBody>
          <GroupLabel>视图</GroupLabel>
        </Group>
        <Group $w={51}>
          <GroupBody><BigButton $w={40}><IconWindows />窗口<Down s={6} /></BigButton></GroupBody>
          <GroupLabel>窗口</GroupLabel>
        </Group>
        <Group $w={180}>
          <GroupBody>
            <BigButton><IconReset />重置该图</BigButton>
            <BigButton><IconResetAll />重置所有</BigButton>
            <BigButton><IconExport />干预按钮</BigButton>
          </GroupBody>
          <GroupLabel>图表</GroupLabel>
        </Group>
        <Group $w={146}>
          <GroupBody>
            <SmallColumn>
              <SmallButton><IconFocus /><SmallLabel>重点布局</SmallLabel></SmallButton>
              <SmallButton $on><IconAverage /><SmallLabel>平均布局</SmallLabel></SmallButton>
              <SmallButton><CheckBox $inset={1}><Tick /></CheckBox><SmallLabel $inset={3}>水平优先</SmallLabel></SmallButton>
            </SmallColumn>
            <BigButton><IconFreeze />冻结窗口</BigButton>
          </GroupBody>
          <GroupLabel>布局</GroupLabel>
        </Group>
      </Ribbon>
      <Body>
        <Side>
          <SideHead>temp(1<Scribble x={41} y={-3} w={103} h={23} seed={3} /></SideHead>
          <TreeBox>
            <TreeRows>
              {TREE.map((t, i) => (
                <TreeRow key={i}><Expander /><TreeText $sel={i === 12} $wide={i < 9}>{i} - {t}</TreeText></TreeRow>
              ))}
            </TreeRows>
            <ScrollBar>
              <svg width="9" height="6"><path d="M1 5 4.500 1.500 8 5" fill="none" stroke="#444" strokeWidth="2" /></svg>
              <svg width="9" height="6"><path d="M1 1 4.500 4.500 8 1" fill="none" stroke="#444" strokeWidth="2" /></svg>
            </ScrollBar>
          </TreeBox>
          <SideTabs>
            <TabArrow><svg width="6" height="10"><path d="M5 1v8L1 5z" fill="#fff" stroke="#000" /></svg></TabArrow>
            <SideTab $on>策略</SideTab>
            <SideTab>共享值</SideTab>
            <SideTab>行情源</SideTab>
            <TabArrow $pad={10}><svg width="6" height="10"><path d="M0 0v10l5.500-5z" /></svg></TabArrow>
          </SideTabs>
          <GripBar><GripDots /></GripBar>
          {SERVERS.map((s, i) => (
            <ServerRow key={i} $sel={s.sel}>
              <Shortcut width="18" height="18" viewBox="0 0 16 16"><path d="M5 3h7v7L9.700 7.700C8 9.500 7 11 7.500 13.500 4 11.500 4.500 8 7.200 5.200z" fill="#111" /></Shortcut>
              <ServerName>{s.text}</ServerName>
              {s.tail && <Tail>{s.tail}</Tail>}
              <Scribble x={s.x} y={s.y} w={s.w} h={22} seed={i + 20} />
            </ServerRow>
          ))}
          <SideFoot>
            <svg width="8" height="16" viewBox="0 0 8 16"><path d="M.5 1 3 3.500.5 6M4.500 1 7 3.500 4.500 6" fill="none" stroke="#000" strokeWidth="1.400" /><path d="M1.500 11h6l-3 3z" /></svg>
          </SideFoot>
        </Side>
        <Main>
          <Mdi>
            {CHARTS.map((c, i) => {
              const t = TITLES[i];
              const active = i === 1;
              return (
                <Win key={i} $active={active}>
                  <WinBar>
                    <DocIcon />
                    <WinTitle $active={active} $ls={t.ls}>
                      {t.text}{t.scribble && <Blot />}{t.tail}
                      {t.scribble && <Scribble x={80} y={-8} w={38} h={25} seed={60 + i} />}
                    </WinTitle>
                    <WinButtons>
                      <WinButton><MinGlyph /></WinButton>
                      <WinButton><MaxGlyph /></WinButton>
                      <WinButton $red={active}><CloseGlyph /></WinButton>
                    </WinButtons>
                  </WinBar>
                  <WinClient><Chart def={c} id={`glow${i}`} /></WinClient>
                </Win>
              );
            })}
          </Mdi>
          <OutHead>
            输出
            <svg width="27" height="12" viewBox="0 0 27 12"><path d="M3 4h9L7.500 8.500z" /><path d="M24 1v6M22 7.500h6M25 7v5M23.500 1.500h4" stroke="#000" /></svg>
          </OutHead>
          <OutTable>
            <Cell $head>ID</Cell><Cell $head>时间</Cell><Cell $head>消息内容</Cell><Cell $head />
            {Array.from({ length: 12 }, (_, i) => <Cell key={i} />)}
          </OutTable>
        </Main>
      </Body>
      <StatusBar><span>窗格 1</span><span>窗格 2</span></StatusBar>
      <TaskEdge />
      <Watermark width="1913" height="1037" opacity="0.3">
        <g transform="translate(342 895) rotate(-21)">
          <text x="0 162 327 480 560 664 806 961 1119 1188 1354 1496" y="0" fill="#fff">huyifeng.net</text>
        </g>
      </Watermark>
    </Screen>
  );
}
